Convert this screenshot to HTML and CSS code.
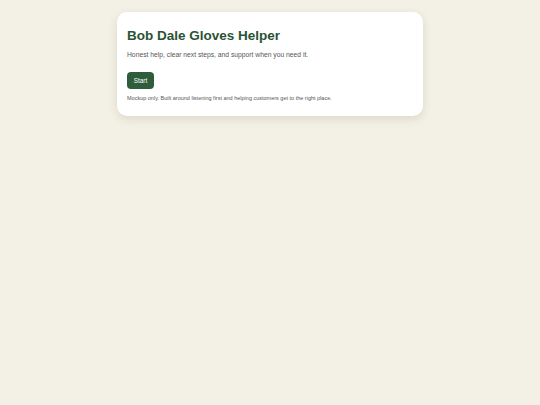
FILE: index.html
```html
<!DOCTYPE html>
<html lang="en">
<head>
<meta charset="utf-8">
<title>Bob Dale Gloves Helper</title>
<link rel="stylesheet" href="styles.css">
</head>
<body>
<main class="card">
  <h1 class="title">Bob Dale Gloves Helper</h1>
  <p class="lead">Honest help, clear next steps, and support when you need it.</p>
  <button class="start" type="button">Start</button>
  <p class="note">Mockup only. Built around listening first and helping customers get to the right place.</p>
</main>
</body>
</html>
```
FILE: styles.css
```css
html, body {
  margin: 0;
  padding: 0;
}
body {
  background: #f3f0e5;
  font-family: "Liberation Sans", Arial, sans-serif;
  padding-top: 12px;
  min-height: 405px;
  box-sizing: border-box;
}
.card {
  width: 306px;
  box-sizing: border-box;
  margin: 0 auto;
  background: #ffffff;
  border-radius: 10px;
  padding: 16px 10px 14px;
  box-shadow: 0 3px 10px rgba(60, 50, 20, 0.12);
}
.title {
  margin: 0;
  font-size: 13.5px;
  line-height: 16px;
  font-weight: 700;
  color: #2b5234;
}
.lead {
  margin: 6px 0 0;
  font-size: 6.75px;
  line-height: 9px;
  color: #555555;
}
.start {
  display: block;
  margin-top: 13px;
  height: 17px;
  width: 27px;
  padding: 0;
  border: none;
  border-radius: 4px;
  background: #2f5d3b;
  color: #ffffff;
  font-family: "Liberation Sans", Arial, sans-serif;
  font-size: 6.4px;
  font-weight: 400;
}
.note {
  margin: 6px 0 0;
  font-size: 5.5px;
  line-height: 7px;
  color: #555555;
}
```
